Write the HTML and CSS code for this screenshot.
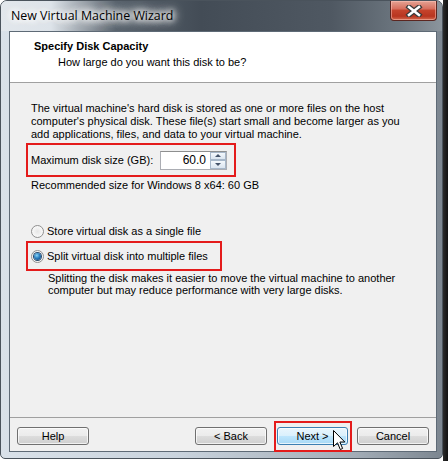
FILE: index.html
```html
<!DOCTYPE html>
<html lang="en">

<head>
    <meta charset="UTF-8">
    <meta name="viewport" content="width=device-width, initial-scale=1.0">
    <title>New Virtual Machine Wizard</title>
    <link rel="stylesheet" href="styles.css">
</head>

<body>
    <div class="window">
        <div class="titlebar">
            <span class="title">New Virtual Machine Wizard</span>
            <div class="close">
                <svg width="18" height="12" viewBox="0 0 18 12">
                    <path d="M4 2 L14 10 M14 2 L4 10" stroke="#3a3a3a" stroke-width="5" stroke-linecap="square" fill="none" />
                    <path d="M4 2 L14 10 M14 2 L4 10" stroke="#fff" stroke-width="2.6" stroke-linecap="square" fill="none" />
                </svg>
            </div>
        </div>

        <div class="client">
            <div class="header">
                <div class="head-title">Specify Disk Capacity</div>
                <div class="head-sub">How large do you want this disk to be?</div>
            </div>

            <div class="content">
                <p class="intro">The virtual machine's hard disk is stored as one or more files on the host<br>
                    computer's physical disk. These file(s) start small and become larger as you<br>
                    add applications, files, and data to your virtual machine.</p>

                <div class="size-row marked">
                    <span class="size-label">Maximum disk size (GB):</span>
                    <div class="spin">
                        <span class="spin-value">60.0</span>
                        <div class="spin-btns">
                            <span class="spin-btn"><i class="arrow-up"></i></span>
                            <span class="spin-btn"><i class="arrow-down"></i></span>
                        </div>
                    </div>
                </div>

                <p class="recommend">Recommended size for Windows 8 x64: 60 GB</p>

                <div class="radio first">
                    <span class="radio-dot"></span>
                    <span>Store virtual disk as a single file</span>
                </div>
                <div class="radio checked marked">
                    <span class="radio-dot"></span>
                    <span>Split virtual disk into multiple files</span>
                </div>
                <p class="desc">Splitting the disk makes it easier to move the virtual machine to another<br>
                    computer but may reduce performance with very large disks.</p>
            </div>

            <div class="footer">
                <button class="btn">Help</button>
                <div class="nav">
                    <button class="btn">&lt; Back</button>
                    <span class="next-mark"><button class="btn hover">Next &gt;</button></span>
                    <button class="btn">Cancel</button>
                </div>
            </div>
        </div>
    </div>

    <!-- mouse pointer over the Next button -->
    <svg class="cursor" width="13" height="21" viewBox="0 0 13 21">
        <path d="M0.5 0.5 L0.5 16.5 L4.5 12.8 L7.3 19.5 L9.6 18.5 L6.9 12 L11.8 12 Z" fill="#fff" stroke="#000" stroke-width="1" stroke-linejoin="miter" />
    </svg>
</body>

</html>
```

FILE: styles.css
```css
body {
    margin: 0;
    width: 448px;
    height: 461px;
    overflow: hidden;
    background: linear-gradient(to right, #ffffff 0, #ffffff 443px, #2b2b2b 443px, #111 448px);
    font-family: "Liberation Sans", Arial, sans-serif;
    font-size: 11px;
    color: #000;
}

.window {
    width: 443px;
    height: 459px;
    box-sizing: border-box;
    border: 1px solid #4a535c;
    border-radius: 7px 7px 5px 5px;
    background: linear-gradient(to right, #d9e1e9 0, #c9d3dd 40%, #a3adb7 80%, #7c8690 100%);
    display: flex;
    flex-direction: column;
}

/* Title bar */
.titlebar {
    height: 30px;
    display: flex;
    align-items: flex-start;
    border-radius: 6px 6px 0 0;
    background: linear-gradient(to right, #e2e7ec 0, #dde3e9 50px, #59636d 115px, #434c56 200px, #4f5862 330px, #6d7780 400px, #8c959d 441px);
}

.title {
    margin: 7px 0 0 10px;
    font-family: "Open Sans", "Noto Sans", sans-serif;
    font-size: 12.4px;
    line-height: 16px;
    color: #000;
    padding: 0 6px 0 0;
    text-shadow: 0 0 6px #fff, 0 0 6px #fff, 0 0 10px #fff, 0 0 12px #fff, 0 0 14px #fff;
}

.close {
    margin-left: auto;
    margin-right: 5px;
    width: 47px;
    height: 20px;
    box-sizing: border-box;
    border: 1px solid #5b2620;
    border-top: none;
    border-radius: 0 0 4px 4px;
    background: linear-gradient(to bottom, #e4a394 0, #d7705f 40%, #c4432c 50%, #b83520 80%, #d46a4f 100%);
    box-shadow: inset 0 0 0 1px rgba(255, 200, 190, 0.5);
    display: flex;
    align-items: center;
    justify-content: center;
}

/* Client area */
.client {
    flex: 1;
    margin: 0 5px 6px 8px;
    border: 1px solid #5e6a76;
    background-color: #f0f0f0;
    display: flex;
    flex-direction: column;
}

.header {
    height: 51px;
    background-color: #fff;
    border-bottom: 1px solid #a0a0a0;
    box-sizing: border-box;
    padding: 8px 0 0 24px;
    line-height: 13px;
}

.head-title {
    font-weight: bold;
}

.head-sub {
    margin: 3px 0 0 24px;
}

.content {
    flex: 1;
    padding: 19px 0 0 21px;
    line-height: 13px;
}

p {
    margin: 0;
}

.marked {
    border: 2px solid #e41b1b;
    box-sizing: border-box;
    margin-left: -5px;
    padding-left: 3px;
}

.size-row {
    margin-top: 2px;
    width: 210px;
    height: 34px;
    display: flex;
    align-items: center;
}

.size-label {
    width: 129px;
}

.spin {
    width: 67px;
    height: 19px;
    box-sizing: border-box;
    border: 1px solid #abadb3;
    border-top-color: #8e8f8f;
    background-color: #fff;
    display: flex;
    align-items: center;
}

.spin-value {
    flex: 1;
    text-align: right;
    padding-right: 4px;
    font-size: 12px;
}

.spin-btns {
    width: 16px;
    height: 17px;
    display: flex;
    flex-direction: column;
}

.spin-btn {
    flex: 1;
    border: 1px solid #a7b7c9;
    background: linear-gradient(to bottom, #f4f8fc, #dbe5f0);
    display: flex;
    align-items: center;
    justify-content: center;
}

.arrow-up {
    border-left: 3px solid transparent;
    border-right: 3px solid transparent;
    border-bottom: 3px solid #44536a;
}

.arrow-down {
    border-left: 3px solid transparent;
    border-right: 3px solid transparent;
    border-top: 3px solid #44536a;
}

.recommend {
    margin-top: 2px;
}

.radio {
    display: flex;
    align-items: center;
    height: 13px;
}

.radio.first {
    margin-top: 33px;
}

.radio.checked {
    margin-top: 3px;
    width: 196px;
    height: 30px;
}

.radio-dot {
    width: 13px;
    height: 13px;
    box-sizing: border-box;
    border-radius: 50%;
    border: 1px solid #8f8f8f;
    background: radial-gradient(circle at 50% 50%, #e6e6e6 0, #f6f6f6 60%, #fdfdfd 100%);
    margin-right: 3px;
    display: flex;
    align-items: center;
    justify-content: center;
}

.checked .radio-dot::after {
    content: "";
    width: 7px;
    height: 7px;
    border-radius: 50%;
    background: radial-gradient(circle at 40% 35%, #8ad4f7 0, #2a7fc0 45%, #0d3a6e 100%);
    box-shadow: 0 0 0 1px #2a4a6a;
}

.desc {
    padding: 1px 0 0 17px;
    line-height: 12px;
}

/* Buttons */
.footer {
    height: 34px;
    box-sizing: border-box;
    border-top: 1px solid #a0a0a0;
    padding: 9px 7px 0 7px;
    display: flex;
    align-items: flex-start;
    justify-content: space-between;
}

.nav {
    display: flex;
    align-items: flex-start;
}

.btn {
    width: 72px;
    height: 18px;
    padding: 0;
    font-family: "Liberation Sans", Arial, sans-serif;
    font-size: 11px;
    color: #000;
    border: 1px solid #707070;
    border-radius: 3px;
    background: linear-gradient(to bottom, #f2f2f2 0, #ebebeb 50%, #dddddd 50%, #cfcfcf 100%);
    box-shadow: inset 0 0 0 1px rgba(255, 255, 255, 0.7);
}

.btn.hover {
    width: 71px;
    border-color: #3c7fb1;
    background: linear-gradient(to bottom, #eaf6fd 0, #d9f0fc 50%, #bee6fd 50%, #a7d9f5 100%);
}

.next-mark {
    margin: -6px 5px 0 7px;
    padding: 4px 2px 5px 1px;
    border: 2px solid #e41b1b;
    display: flex;
}

.cursor {
    position: absolute;
    left: 333px;
    top: 430px;
}
```
